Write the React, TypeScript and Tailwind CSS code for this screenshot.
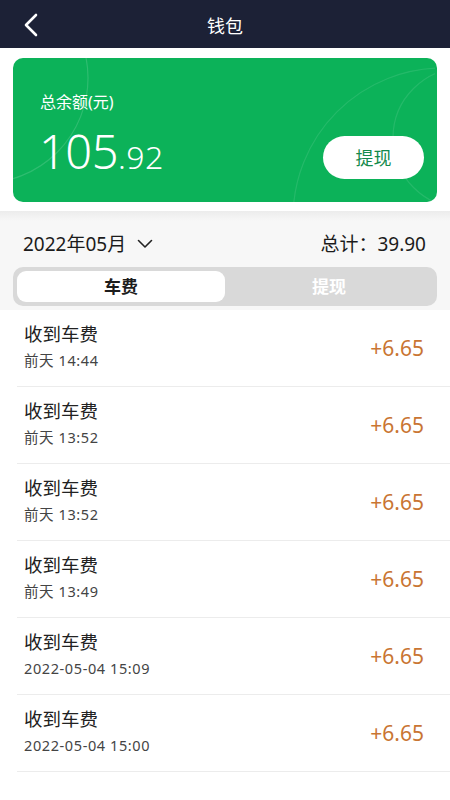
import React from 'react';

const records = [
  { time: '前天 14:44', amount: '+6.65' },
  { time: '前天 13:52', amount: '+6.65' },
  { time: '前天 13:52', amount: '+6.65' },
  { time: '前天 13:49', amount: '+6.65' },
  { time: '2022-05-04 15:09', amount: '+6.65' },
  { time: '2022-05-04 15:00', amount: '+6.65' },
];

const font = { fontFamily: '"Noto Sans", "Noto Sans CJK SC", sans-serif' };

export default function App() {
  return (
    <div className="w-[450px] h-[800px] bg-white overflow-hidden" style={font}>
      {/* Header */}
      <div className="relative h-[48px] bg-[#1c2136] flex items-center justify-center">
        <svg className="absolute left-[22px] top-[13px]" width="18" height="24" viewBox="0 0 18 24" fill="none">
          <path d="M14 2 L4 12 L14 22" stroke="white" strokeWidth="2.6" strokeLinecap="round" strokeLinejoin="round" />
        </svg>
        <span className="text-white text-[18px] leading-none pt-[3px]">钱包</span>
      </div>

      {/* Balance card */}
      <div className="px-[13px] pt-[10px] pb-[9px]">
        <div className="relative h-[144px] rounded-[10px] bg-[#0cb259] overflow-hidden">
          {/* decorative arcs */}
          <svg className="absolute inset-0" width="422" height="144" viewBox="0 0 422 144" fill="none">
            <circle cx="-30" cy="20" r="105" stroke="white" strokeOpacity="0.14" strokeWidth="1.2" />
            <circle cx="430" cy="160" r="150" stroke="white" strokeOpacity="0.1" strokeWidth="1.2" />
            <circle cx="450" cy="80" r="70" stroke="white" strokeOpacity="0.1" strokeWidth="1.2" />
          </svg>
          <div className="relative pl-[27px] pt-[36px] text-white text-[16px] leading-none">总余额(元)</div>
          <div className="relative pl-[26px] pt-[18px] text-white leading-none flex items-baseline">
            <span className="text-[47px] font-light tracking-[-0.5px]">105</span>
            <span className="text-[32px] font-light tracking-[0.5px]">.92</span>
          </div>
          <button className="absolute right-[13px] top-[78px] w-[101px] h-[43px] rounded-full bg-white text-[#148a4c] text-[18px] leading-none">
            提现
          </button>
        </div>
      </div>

      {/* Summary + tabs */}
      <div className="bg-gradient-to-b from-[#ececec] to-[#f7f7f7] h-[10px]" />
      <div className="bg-[#f7f7f7] px-[13px] pb-[4px]">
        <div className="flex items-center justify-between h-[46px] pl-[10px] pr-[11px]">
          <div className="flex items-center text-[#1b1b1b] text-[19px] leading-none">
            <span>2022年05月</span>
            <svg className="ml-[11px]" width="16" height="10" viewBox="0 0 16 10" fill="none">
              <path d="M1.5 1.5 L8 8 L14.5 1.5" stroke="#222" strokeWidth="1.6" strokeLinecap="round" strokeLinejoin="round" />
            </svg>
          </div>
          <span className="text-[#1b1b1b] text-[19px] leading-none">总计：39.90</span>
        </div>
        <div className="flex h-[39px] rounded-[10px] bg-[#d9d9d9] p-[4px]">
          <div className="flex-1 rounded-[9px] bg-white flex items-center justify-center text-[#1d1d1d] text-[17px] font-bold">
            车费
          </div>
          <div className="flex-1 flex items-center justify-center text-white text-[17px] font-bold">提现</div>
        </div>
      </div>

      {/* Records */}
      <div>
        {records.map((r, i) => (
          <div key={i} className="ml-[17px] h-[77px] border-b border-[#ececec] flex items-center justify-between pr-[26px]">
            <div className="pl-[7px] flex flex-col -mt-[4px]">
              <span className="text-[#222] text-[18.5px] leading-none mb-[9px]">收到车费</span>
              <span className="text-[#444] text-[14.5px] tracking-[0.6px] leading-none">{r.time}</span>
            </div>
            <span className="text-[#c97533] text-[21px] leading-none">{r.amount}</span>
          </div>
        ))}
      </div>
    </div>
  );
}
